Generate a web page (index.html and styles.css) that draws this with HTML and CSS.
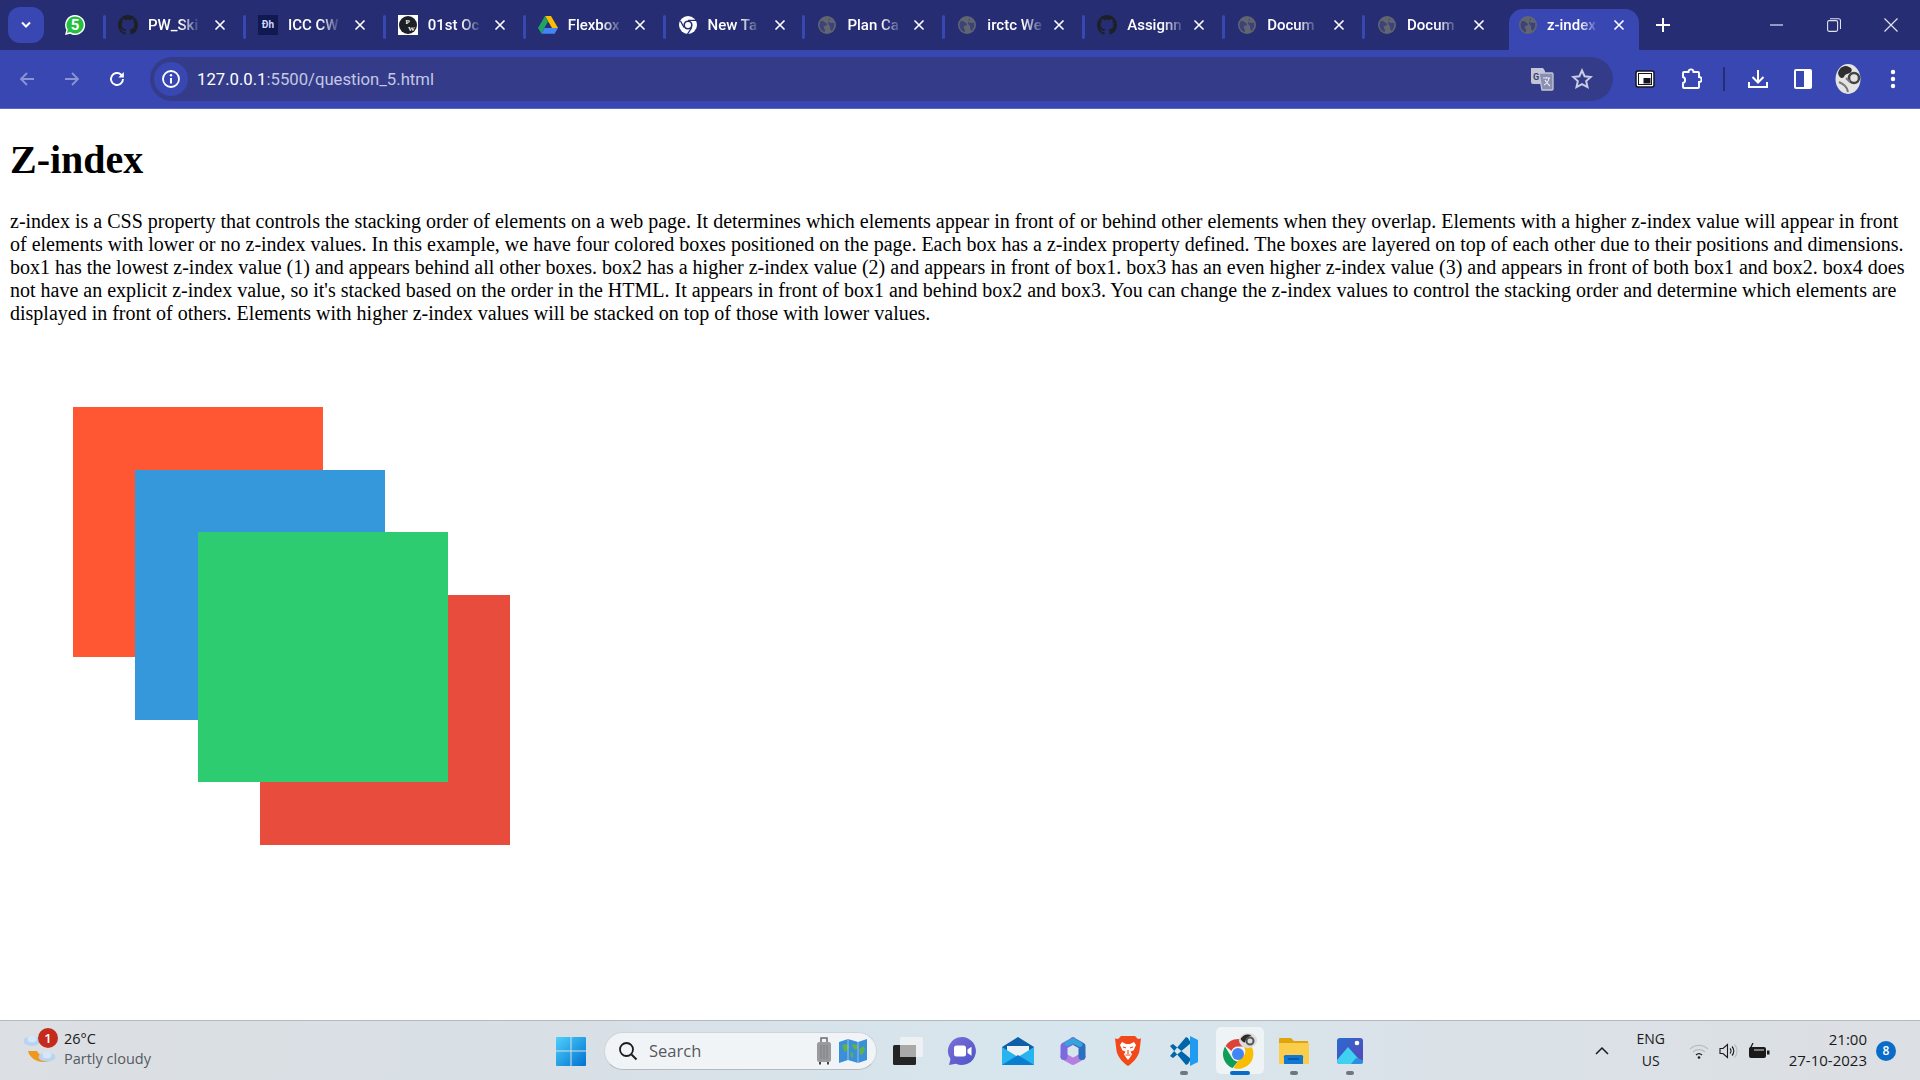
FILE: index.html
```html
<!DOCTYPE html>
<html lang="en">
<head>
<meta charset="utf-8">
<title>z-index</title>
<link rel="stylesheet" href="styles.css">
</head>
<body>
<svg class="defs" width="0" height="0" aria-hidden="true">
  <symbol id="gh" viewBox="0 0 16 16"><path fill="#1d2026" d="M8 0C3.58 0 0 3.58 0 8c0 3.54 2.29 6.53 5.47 7.59.4.07.55-.17.55-.38 0-.19-.01-.82-.01-1.49-2.01.37-2.53-.49-2.69-.94-.09-.23-.48-.94-.82-1.13-.28-.15-.68-.52-.01-.53.63-.01 1.08.58 1.23.82.72 1.21 1.87.87 2.33.66.07-.52.28-.87.51-1.07-1.78-.2-3.64-.89-3.64-3.95 0-.87.31-1.59.82-2.15-.08-.2-.36-1.02.08-2.12 0 0 .67-.21 2.2.82.64-.18 1.32-.27 2-.27s1.36.09 2 .27c1.53-1.04 2.2-.82 2.2-.82.44 1.1.16 1.92.08 2.12.51.56.82 1.27.82 2.15 0 3.07-1.87 3.75-3.65 3.95.29.25.54.73.54 1.48 0 1.07-.01 1.93-.01 2.2 0 .21.15.46.55.38A8.013 8.013 0 0016 8c0-4.42-3.58-8-8-8z"/></symbol>
  <symbol id="globe" viewBox="0 0 18 18"><circle cx="9" cy="9" r="9" fill="#62656f"/><path fill="#3c4378" d="M2.800 5.200c1.500-.3 3 .1 4 1 .9.900 2.300 1 2.100 2.300-.2 1.300-2 .9-3 1.800-.7.7.3 2.200.9 3.200.4.800.2 1.700-.3 2.600C3.700 15.200 1.500 12.400 1.500 9c0-1.400.5-2.700 1.300-3.800zM11.700 2.200c.6.800.2 1.900-.7 2.500-.8.500-.6 1.500.3 1.900 1.300.5 3.100-.1 4.900.5.500 3 -.5 6-2.800 7.800-.9-.8-1.500-2.400-1.200-4 .1-1.200-1.600-1.600-2-2.800-.3-1.600.4-4.400 1.500-5.900z"/></symbol>
  <symbol id="close" viewBox="0 0 12 12"><path d="M1.500 1.500l9 9M10.500 1.500l-9 9" stroke="#fff" stroke-width="1.600" fill="none"/></symbol>
</svg>

<header class="chrome">
  <div class="tabstrip">
    <div class="tab-menu"><svg width="12" height="8" viewBox="0 0 12 8"><path d="M2 1.500l4 4 4-4" fill="none" stroke="#fff" stroke-width="2"/></svg></div>
    <div class="pin">
      <svg width="22" height="22" viewBox="0 0 22 22"><path fill="#fff" d="M11 1a10 10 0 0 0-8.600 15L1 21l5.200-1.300A10 10 0 1 0 11 1z"/><path fill="#25c03f" d="M11 2.500a8.500 8.500 0 0 0-7.200 13L3 19l3.500-.9A8.500 8.500 0 1 0 11 2.500z"/><text x="11" y="16" class="wa-num">5</text></svg>
    </div>
    <div class="tab"><svg class="fav" width="20" height="20"><use href="#gh"/></svg><span class="tab-title">PW_Ski</span><svg class="x" width="12" height="12"><use href="#close"/></svg></div>
    <div class="tab"><span class="fav fav-dh">Ðh</span><span class="tab-title">ICC CW</span><svg class="x" width="12" height="12"><use href="#close"/></svg></div>
    <div class="tab"><svg class="fav" width="20" height="20" viewBox="0 0 20 20"><rect width="20" height="20" fill="#fff"/><circle cx="10" cy="10" r="9" fill="#1c1f24"/><text x="7.500" y="9" class="pw">P</text><text x="10" y="16" class="pw">W</text></svg><span class="tab-title">01st Oc</span><svg class="x" width="12" height="12"><use href="#close"/></svg></div>
    <div class="tab"><svg class="fav" width="20" height="18" viewBox="0 0 20 18"><path fill="#fbbc04" d="M7 0h6l7 12h-6z"/><path fill="#1fa463" d="M7 0l3 5.500L3.400 17.500 0 12z"/><path fill="#4285f4" d="M6.500 12H20l-3.400 5.800H3.400z"/></svg><span class="tab-title">Flexbox</span><svg class="x" width="12" height="12"><use href="#close"/></svg></div>
    <div class="tab"><svg class="fav" width="18" height="18" viewBox="0 0 18 18"><circle cx="9" cy="9" r="9" fill="#fff"/><circle cx="9" cy="9" r="4.600" fill="#252d72"/><circle cx="9" cy="9" r="3" fill="#fff"/><path d="M9 4.400h8M5 11.500L1.500 5M12.800 11.500L8.500 18" stroke="#252d72" stroke-width="1.300"/></svg><span class="tab-title">New Ta</span><svg class="x" width="12" height="12"><use href="#close"/></svg></div>
    <div class="tab"><svg class="fav" width="18" height="18"><use href="#globe"/></svg><span class="tab-title">Plan Ca</span><svg class="x" width="12" height="12"><use href="#close"/></svg></div>
    <div class="tab"><svg class="fav" width="18" height="18"><use href="#globe"/></svg><span class="tab-title">irctc We</span><svg class="x" width="12" height="12"><use href="#close"/></svg></div>
    <div class="tab"><svg class="fav" width="20" height="20"><use href="#gh"/></svg><span class="tab-title">Assignn</span><svg class="x" width="12" height="12"><use href="#close"/></svg></div>
    <div class="tab"><svg class="fav" width="18" height="18"><use href="#globe"/></svg><span class="tab-title">Docum</span><svg class="x" width="12" height="12"><use href="#close"/></svg></div>
    <div class="tab"><svg class="fav" width="18" height="18"><use href="#globe"/></svg><span class="tab-title">Docum</span><svg class="x" width="12" height="12"><use href="#close"/></svg></div>
    <div class="tab tab-active"><svg class="fav" width="18" height="18"><use href="#globe"/></svg><span class="tab-title">z-index</span><svg class="x" width="12" height="12"><use href="#close"/></svg></div>
    <svg class="plus" width="14" height="14" viewBox="0 0 14 14"><path d="M7 0v14M0 7h14" stroke="#fff" stroke-width="2"/></svg>
    <div class="winctl">
      <svg width="14" height="14" viewBox="0 0 14 14"><path d="M0 7h13" stroke="#dfe2f2" stroke-width="1.200"/></svg>
      <svg width="14" height="14" viewBox="0 0 14 14"><rect x=".6" y="2.600" width="10" height="10.800" rx="1.600" fill="none" stroke="#dfe2f2" stroke-width="1.100"/><path d="M3 .7h8.500a2 2 0 0 1 2 2V11" fill="none" stroke="#dfe2f2" stroke-width="1.100"/></svg>
      <svg width="14" height="14" viewBox="0 0 14 14"><path d="M.5.500l13 13M13.500.500l-13 13" stroke="#dfe2f2" stroke-width="1.200"/></svg>
    </div>
  </div>
  <div class="toolbar">
    <div class="nav">
      <svg width="18" height="18" viewBox="0 0 18 18"><path d="M16 9H3M9 3L3 9l6 6" fill="none" stroke="#8b94d3" stroke-width="1.800"/></svg>
      <svg width="18" height="18" viewBox="0 0 18 18"><path d="M2 9h13M9 3l6 6-6 6" fill="none" stroke="#8b94d3" stroke-width="1.800"/></svg>
      <svg width="18" height="18" viewBox="0 0 18 18"><path d="M15 9a6 6 0 1 1-1.800-4.300L15 6.500" fill="none" stroke="#fff" stroke-width="1.900"/><path d="M15.800 2v5.500h-5.500z" fill="#fff"/></svg>
    </div>
    <div class="omnibox">
      <span class="site-info"><svg width="20" height="20" viewBox="0 0 20 20"><circle cx="10" cy="10" r="8" fill="none" stroke="#fff" stroke-width="1.800"/><path d="M10 9v5.500" stroke="#fff" stroke-width="2"/><circle cx="10" cy="6.300" r="1.200" fill="#fff"/></svg></span>
      <span class="url"><span class="url-host">127.0.0.1</span>:5500/question_5.html</span>
      <svg class="omni-trans" width="24" height="24" viewBox="0 0 24 24"><path fill="#c3c6d8" d="M1 1h12l2 3v13H3a2 2 0 0 1-2-2z"/><path fill="#8a8fb0" stroke="#c3c6d8" stroke-width="1.300" d="M9 6h13a1 1 0 0 1 1 1v15a1 1 0 0 1-1 1H12z"/><text x="3" y="12.500" class="trans-g">G</text><path d="M13 11h7M16.500 10v1.500M19 11c-.5 3.500-3 6-5 7M15 13c1 2 3 4 5 6" fill="none" stroke="#e9ebf4" stroke-width="1.100"/></svg>
      <svg class="omni-star" width="22" height="22" viewBox="0 0 22 22"><path d="M11 2.500l2.600 5.700 6.200.7-4.600 4.200 1.300 6.100L11 16.200l-5.500 3 1.300-6.100-4.600-4.200 6.200-.7z" fill="none" stroke="#c9cde4" stroke-width="2"/></svg>
    </div>
    <div class="tools">
      <svg class="t-pip" width="20" height="20" viewBox="0 0 20 20"><rect x="1" y="2" width="18" height="16" rx="2" fill="#fff" stroke="#14161f" stroke-width="1.500"/><rect x="3.500" y="4.500" width="13" height="11" fill="#fff" stroke="#14161f" stroke-width="1"/><rect x="8.500" y="9" width="7" height="5.500" fill="#14161f"/></svg>
      <svg class="t-ext" width="22" height="24" viewBox="0 0 22 24"><path d="M4 5h4.500c0-3.500 5-3.500 5 0H18a1 1 0 0 1 1 1v4c3.500 0 3.500 5 0 5v5a1 1 0 0 1-1 1H4a1 1 0 0 1-1-1v-4c2.800-.5 2.800-5.500 0-6V6a1 1 0 0 1 1-1z" fill="none" stroke="#fff" stroke-width="1.900"/></svg>
      <span class="t-sep"></span>
      <svg class="t-dl" width="22" height="24" viewBox="0 0 22 24"><path d="M11 3v12M5.500 10l5.500 5.500 5.500-5.500M2 15v5h18v-5" fill="none" stroke="#fff" stroke-width="2"/></svg>
      <svg class="t-side" width="20" height="22" viewBox="0 0 20 22"><rect x="1" y="1" width="18" height="20" rx="2" fill="#fff"/><rect x="3" y="3" width="8" height="16" fill="#3947b3"/></svg>
      <svg class="t-ava" width="26" height="30" viewBox="0 0 26 30"><ellipse cx="13" cy="15" rx="12.500" ry="15" fill="#e4e4e4"/><path d="M3 9c2-7 8-8 11-6 3 1 4 4 1 6-3 1-5 1-6 4-2 2-5 1-6-4z" fill="#2e2e2e"/><circle cx="19" cy="14" r="5" fill="none" stroke="#444" stroke-width="2.500"/><path d="M4 18c4 2 8 4 9 10M11 14l4 4" fill="none" stroke="#777" stroke-width="2"/></svg>
      <svg class="t-menu" width="6" height="22" viewBox="0 0 6 22"><circle cx="3" cy="4" r="2.200" fill="#fff"/><circle cx="3" cy="11" r="2.200" fill="#fff"/><circle cx="3" cy="18" r="2.200" fill="#fff"/></svg>
    </div>
  </div>
</header>

<main class="page">
  <h1>Z-index</h1>
  <p>z-index is a CSS property that controls the stacking order of elements on a web page. It determines which elements appear in front of or behind other elements when they overlap. Elements with a higher z-index value will appear in front of elements with lower or no z-index values. In this example, we have four colored boxes positioned on the page. Each box has a z-index property defined. The boxes are layered on top of each other due to their positions and dimensions. box1 has the lowest z-index value (1) and appears behind all other boxes. box2 has a higher z-index value (2) and appears in front of box1. box3 has an even higher z-index value (3) and appears in front of both box1 and box2. box4 does not have an explicit z-index value, so it's stacked based on the order in the HTML. It appears in front of box1 and behind box2 and box3. You can change the z-index values to control the stacking order and determine which elements are displayed in front of others. Elements with higher z-index values will be stacked on top of those with lower values.</p>
  <div class="stage">
    <div class="box box4"></div>
    <div class="box box1"></div>
    <div class="box box2"></div>
    <div class="box box3"></div>
  </div>
</main>

<footer class="taskbar">
  <div class="weather">
    <span class="w-icon">
      <svg width="32" height="34" viewBox="0 0 32 34"><path d="M4 17c2 10 17 15 27 7-6 2-15-1-18-7z" fill="#f0981e"/><ellipse cx="8" cy="7" rx="8.500" ry="5" fill="#b7d4f0"/><ellipse cx="8" cy="5" rx="4.500" ry="3.500" fill="#d5e6f6"/><ellipse cx="23" cy="23" rx="8.500" ry="4.500" fill="#b7d4f0"/><ellipse cx="23" cy="21" rx="4.500" ry="3.500" fill="#d5e6f6"/></svg>
      <span class="w-badge">1</span>
    </span>
    <div class="w-text"><div class="w-temp">26°C</div><div class="w-desc">Partly cloudy</div></div>
  </div>
  <div class="apps">
    <svg class="a-start" width="30" height="30" viewBox="0 0 30 30"><defs><linearGradient id="win" x1="0" y1="0" x2="1" y2="1"><stop offset="0" stop-color="#4fd0fb"/><stop offset="1" stop-color="#0071d0"/></linearGradient></defs><path fill="url(#win)" d="M1 1h13.500v13.500H0V2a1 1 0 0 1 1-1zM15.500 1H29a1 1 0 0 1 1 1v12.500H15.500zM0 15.500h14.500V30H1a1 1 0 0 1-1-1zM15.500 15.500H30V29a1 1 0 0 1-1 1H15.500z"/></svg>
    <div class="search">
      <svg width="20" height="20" viewBox="0 0 20 20"><circle cx="8.500" cy="8.500" r="6.500" fill="none" stroke="#1c1c1c" stroke-width="1.800"/><path d="M13.500 13.500L18.500 18.500" stroke="#1c1c1c" stroke-width="2"/></svg>
      <span class="search-text">Search</span>
      <svg class="s-bag" width="16" height="28" viewBox="0 0 16 28"><path d="M5 5V1h6v4" fill="none" stroke="#6a6a78" stroke-width="1.500"/><rect x="1" y="5" width="14" height="20" rx="2.500" fill="#9a9a9e"/><path d="M5 8v14M8 8v14M11 8v14" stroke="#7d7d82"/><rect x="3" y="25" width="2" height="2.500" fill="#444"/><rect x="11" y="25" width="2" height="2.500" fill="#444"/></svg>
      <svg class="s-map" width="28" height="24" viewBox="0 0 28 24"><path fill="#3a8fd9" d="M0 3l9-3 10 3 9-3v21l-9 3-10-3-9 3z"/><path fill="#5fb24a" d="M3 6l5-1 2 3-3 5-2-1zM13 5l5 1 1 3-3 2-2-2zM20 10l5-3 1 4-3 5-2-1zM11 13l3 1v5l-2-1z"/><path d="M9 0v21M19 3v21" stroke="#d9e6f2" stroke-opacity=".6"/></svg>
    </div>
    <svg class="a-tv" width="30" height="28" viewBox="0 0 30 28"><rect y="8" width="23" height="20" rx="1.500" fill="#242424"/><rect x="7" y="0" width="23" height="20" rx="1.500" fill="#f2f3f4" fill-opacity=".85"/><rect x="7" y="8" width="16" height="12" fill="#a9a9a9"/></svg>
    <svg class="a-meet" width="30" height="30" viewBox="0 0 30 30"><defs><linearGradient id="meet" x1="0" y1="0" x2="1" y2="1"><stop offset="0" stop-color="#7b6fd8"/><stop offset="1" stop-color="#4c54c8"/></linearGradient></defs><path fill="url(#meet)" d="M15 1a14 14 0 1 1-6 26.700L2 29l1.500-6A14 14 0 0 1 15 1z"/><rect x="7" y="9.500" width="12" height="11" rx="2.500" fill="#fff"/><path d="M20.500 13.500l4-2.800v9l-4-2.800z" fill="#fff"/></svg>
    <svg class="a-mail" width="32" height="28" viewBox="0 0 32 28"><path fill="#0e5ea8" d="M16 0l16 10v4H0v-4z"/><path fill="#eef1f4" d="M5 9h22v6l-11 6-11-6z"/><path fill="#27b4ef" d="M0 10l16 10 16-10v18H0z"/><path fill="#0a7fd0" d="M0 28l16-10 16 10z"/></svg>
    <svg class="a-365" width="28" height="30" viewBox="0 0 28 30"><g fill="none" stroke-width="7" stroke-linejoin="round" stroke-linecap="round"><path d="M5 20.500l9 5 9-5" stroke="#b57fe2"/><path d="M14 5l9 5v10.500" stroke="#2b6fc0"/><path d="M5 20.500V10l9-5" stroke="#7a6bdc"/><path d="M8 7.500l6-2.800 7 3.800" stroke="#35a3dc" stroke-width="5"/></g></svg>
    <svg class="a-brave" width="26" height="30" viewBox="0 0 26 30"><path fill="#f2491c" d="M6 0h14l3 3 3-.5-1.500 12C24 20 18 27 13 30 8 27 2 20 1.500 14.500L0 2.500 3 3z"/><path fill="#fff" d="M7 6l4 2h4l4-2 2 3-2.500 5.500-3 1 1.500 3-3.500 5h-1l-3.500-5 1.500-3-3-1L5 9z"/><path d="M8 11l3 1M18 11l-3 1M13 14v4M10.500 19h5" stroke="#f2491c" stroke-width="1.200" fill="none"/></svg>
    <div class="a-wrap a-code"><svg width="30" height="30" viewBox="0 0 30 30"><path fill="#0065a9" d="M1 10l3-2 18 15-3 5-2 1zM1 20l3 2L22 7l-3-5-2-1z"/><path fill="#1f9cf0" d="M21 0l8 4v22l-8 4z"/></svg><i class="dash"></i></div>
    <div class="a-wrap a-chrome"><svg width="34" height="36" viewBox="0 0 34 36"><path fill="#db4437" d="M15 6a15 15 0 0 1 13 7.500H15a7 7 0 0 0-6.500 4.500L2.500 13A15 15 0 0 1 15 6z"/><path fill="#0f9d58" d="M2 13.500L9 25a7 7 0 0 0 6 3.500L9.500 35A15 15 0 0 1 2 13.500z"/><path fill="#fbbc04" d="M28.500 13.500A15 15 0 0 1 10.500 35l6.500-10a7 7 0 0 0 3.500-11.500z"/><circle cx="15" cy="21" r="6" fill="#4285f4"/><ellipse cx="25" cy="7.500" rx="9" ry="7.500" fill="#dcdcdc"/><path d="M17.500 6c2-4 7-6 11-3.500-3 1-6 3-6 6 0 2-3 1-5-2.500z" fill="#2a2a2a"/><circle cx="27" cy="8" r="3.500" fill="none" stroke="#555" stroke-width="2"/></svg><i class="dash dash-on"></i></div>
    <div class="a-wrap a-folder"><svg width="30" height="26" viewBox="0 0 30 26"><path fill="#dfa50f" d="M1 0h11l3 3h14v6H0V1a1 1 0 0 1 1-1z"/><path fill="#fbcd4c" d="M0 5h30v21H0z"/><path fill="#0f78d4" d="M5 26v-6a2 2 0 0 1 2-3h15a2 2 0 0 1 2 3v6z"/><path d="M9 21h11" stroke="#0a4f90" stroke-width="1.500"/></svg><i class="dash"></i></div>
    <div class="a-wrap a-photos"><svg width="26" height="26" viewBox="0 0 26 26"><defs><linearGradient id="ph" x1="0" y1="0" x2="1" y2="1"><stop offset="0" stop-color="#2a6bd0"/><stop offset="1" stop-color="#5a45b8"/></linearGradient></defs><rect width="26" height="26" rx="3" fill="url(#ph)"/><circle cx="20" cy="5" r="2.300" fill="#fff"/><path d="M0 22L11 9l8 9 7 8H3a3 3 0 0 1-3-3z" fill="#3fd1f2"/><path d="M14 26l5-6 7 2v1a3 3 0 0 1-3 3z" fill="#2b8fdd"/></svg><i class="dash"></i></div>
  </div>
  <div class="tray">
    <svg class="tr-chev" width="14" height="9" viewBox="0 0 14 9"><path d="M1 8l6-6 6 6" fill="none" stroke="#1a1a1a" stroke-width="1.500"/></svg>
    <div class="tr-lang"><div>ENG</div><div>US</div></div>
    <svg class="tr-wifi" width="20" height="16" viewBox="0 0 20 16"><path d="M1 6a13 13 0 0 1 18 0" fill="none" stroke="#b9bcc0" stroke-width="1.200"/><path d="M4 9a9 9 0 0 1 12 0" fill="none" stroke="#b9bcc0" stroke-width="1.200"/><path d="M7 12a4.500 4.500 0 0 1 6 0" fill="none" stroke="#1a1a1a" stroke-width="1.300"/><circle cx="10" cy="14.500" r="1.300" fill="#1a1a1a"/></svg>
    <svg class="tr-vol" width="20" height="16" viewBox="0 0 20 16"><path d="M1 5.500h3l4.500-4v13L4 10.500H1z" fill="none" stroke="#1a1a1a" stroke-width="1.100"/><path d="M11 5.500a3.500 3.500 0 0 1 0 5M13 3.500a6.500 6.500 0 0 1 0 9" fill="none" stroke="#1a1a1a" stroke-width="1.100"/><path d="M15.500 1.500a9.500 9.500 0 0 1 0 13" fill="none" stroke="#b9bcc0" stroke-width="1.100"/></svg>
    <svg class="tr-bat" width="22" height="16" viewBox="0 0 22 16"><rect x="1" y="4" width="17" height="11" rx="2" fill="#1a1a1a"/><rect x="19" y="7.500" width="2.500" height="4" fill="#1a1a1a"/><path d="M5 0L2 6h3L3.500 10" fill="none" stroke="#1a1a1a" stroke-width="1.300"/><path d="M6 7h10" stroke="#d8dde1" stroke-width="1"/></svg>
    <div class="tr-clock"><div>21:00</div><div>27-10-2023</div></div>
    <span class="tr-badge">8</span>
  </div>
</footer>
</body>
</html>
```
FILE: styles.css
```css
* { box-sizing: border-box; }
html, body { margin: 0; height: 100%; }
body {
  display: flex;
  flex-direction: column;
  height: 1080px;
  overflow: hidden;
  background: #fff;
  color: #000;
  font-family: "Liberation Serif", serif;
}
.defs { position: absolute; }

/* Browser frame */
.chrome { flex: none; height: 109px; background: #3947b3; border-bottom: 1px solid #5a68c8; font-family: Roboto, sans-serif; }
.tabstrip { height: 50px; background: #262d72; display: flex; align-items: center; padding-left: 8px; position: relative; }
.tab-menu { width: 36px; height: 36px; border-radius: 12px; background: #3947b3; display: flex; align-items: center; justify-content: center; flex: none; }
.pin { width: 60px; flex: none; display: flex; justify-content: center; margin-top: -1px; padding-left: 2px; }
.wa-num { font: 700 15px Roboto, sans-serif; fill: #fff; text-anchor: middle; }
.tab { width: 139.9px; flex: none; height: 41px; margin-top: 9px; align-self: flex-start; position: relative; color: #fff; font-size: 15px; font-weight: 500; }
.tab::before { content: ""; position: absolute; left: -1px; top: 6px; width: 3px; height: 24px; background: #3947b3; border-radius: 2px; }
.fav { position: absolute; left: 24px; top: 16px; transform: translate(-50%, -50%); }
.fav-dh { width: 20px; height: 20px; background: #101a50; color: #cfd8ff; font: 700 10px/20px Roboto, sans-serif; text-align: center; }
.pw { font: 700 7px "Liberation Serif", serif; fill: #fff; }
.trans-g { font: 700 9px Roboto, sans-serif; fill: #3a3f6e; }
.tab-title { position: absolute; left: 44px; top: 3px; height: 26px; line-height: 26px; white-space: nowrap; -webkit-mask-image: linear-gradient(90deg, #000 65%, rgba(0,0,0,.15) 100%); mask-image: linear-gradient(90deg, #000 65%, rgba(0,0,0,.15) 100%); }
.x { position: absolute; left: 110px; top: 10px; }
.tab-active { background: #3947b3; border-radius: 14px 14px 0 0; margin-left: 6px; width: 130px; }
.tab-active::before { display: none; }
.tab-active .fav { left: 19px; }
.tab-active .tab-title { left: 38px; }
.tab-active .x { left: 104px; }
.plus { margin-left: 17px; flex: none; }
.winctl { margin-left: auto; display: flex; gap: 43px; padding-right: 22px; }

.toolbar { height: 58px; display: flex; align-items: center; padding-left: 18px; }
.nav { display: flex; gap: 27px; flex: none; width: 132px; }
.omnibox { width: 1463px; height: 44px; margin-bottom: 1px; background: #343c8a; border-radius: 22px; display: flex; align-items: center; flex: none; padding-left: 4px; }
.site-info { width: 34px; height: 34px; border-radius: 50%; background: #3947b3; display: flex; align-items: center; justify-content: center; flex: none; }
.url { margin-left: 9px; padding-top: 2px; font: 400 16.700px Roboto, sans-serif; color: #c3c7e3; }
.url-host { color: #fff; }
.omni-trans { margin-left: auto; }
.omni-star { margin-left: 17px; margin-right: 20px; }
.tools { flex: 1; display: flex; align-items: center; }
.t-pip { margin-left: 22px; }
.t-ext { margin-left: 25px; }
.t-sep { width: 2px; height: 24px; background: #262d72; margin-left: 21px; }
.t-dl { margin-left: 22px; }
.t-side { margin-left: 24px; }
.t-ava { margin-left: 22px; }
.t-menu { margin-left: 29px; }

/* Page content */
.page { flex: 1; padding: 0 10px; min-height: 0; }
h1 { font-size: 40px; font-weight: 700; margin: 28px 0 26.800px; line-height: 46px; }
p { font-size: 20px; line-height: 23px; margin: 0; }
.stage { position: relative; height: 500px; }
.box { position: absolute; width: 250px; height: 250px; }
.box1 { left: 63px; top: 82px; background: #ff5733; }
.box2 { left: 125px; top: 145px; background: #3498db; }
.box3 { left: 188px; top: 207px; background: #2ecc71; }
.box4 { left: 250px; top: 270px; background: #e74c3c; }

/* Taskbar */
.taskbar { flex: none; height: 60px; position: relative; display: flex; align-items: center; border-top: 1px solid #b5b8bd; background: linear-gradient(90deg, #dcdfe3 0%, #d8e0e6 30%, #d7e6ee 55%, #dae2e8 75%, #dcdfe3 100%); font-family: "Open Sans", sans-serif; color: #1a1a1a; }
.weather { width: 560px; flex: none; display: flex; align-items: center; padding-left: 24px; }
.w-icon { position: relative; width: 32px; height: 34px; flex: none; }
.w-badge { position: absolute; left: 14px; top: -6px; width: 20px; height: 20px; border-radius: 50%; background: #c42b1c; color: #fff; font-size: 13px; font-weight: 600; line-height: 20px; text-align: center; }
.w-text { margin-left: 8px; margin-top: -3px; font-size: 14.500px; line-height: 20px; }
.w-desc { color: #555a60; }
.apps { flex: none; display: flex; align-items: center; }
.a-start { margin-left: -4px; }
.search { width: 273px; height: 38px; margin-left: 18px; border-radius: 19px; background: #f1f4f7; border: 1px solid #cfd4d8; border-bottom-color: #b5babe; display: flex; align-items: center; padding-left: 13px; }
.search-text { margin-left: 11px; font-size: 16.500px; color: #55595e; }
.s-bag { margin-left: auto; }
.s-map { margin-left: 7px; margin-right: 9px; }
.a-tv { margin-left: 16px; }
.a-meet { margin-left: 24px; }
.a-mail { margin-left: 25px; }
.a-365 { margin-left: 25px; }
.a-brave { margin-left: 28px; }
.a-wrap { width: 48px; height: 47px; display: flex; justify-content: center; align-items: center; position: relative; }
.a-code { margin-left: 19px; }
.a-chrome { margin-left: 8px; background: #eef3f6; border-radius: 5px; }
.a-folder { margin-left: 5.500px; }
.a-photos { margin-left: 8px; }
.dash { position: absolute; left: 50%; bottom: -1px; width: 8px; height: 4px; margin-left: -4px; border-radius: 2px; background: #71767b; }
.dash-on { width: 20px; margin-left: -10px; background: #0a6cc9; }
.tray { margin-left: auto; display: flex; align-items: center; flex: none; padding-right: 24px; }
.tr-chev { flex: none; }
.tr-lang { margin-left: 20px; margin-top: -2px; width: 44px; text-align: center; font-size: 14px; line-height: 22px; }
.tr-wifi { margin-left: 16px; }
.tr-vol { margin-left: 10px; }
.tr-bat { margin-left: 9px; }
.tr-clock { margin-left: 19px; margin-top: -2px; text-align: right; font-size: 15px; line-height: 21px; }
.tr-badge { margin-left: 9px; width: 20px; height: 20px; border-radius: 50%; background: #0a6cc9; color: #fff; font-size: 12px; font-weight: 600; line-height: 20px; text-align: center; }
```
